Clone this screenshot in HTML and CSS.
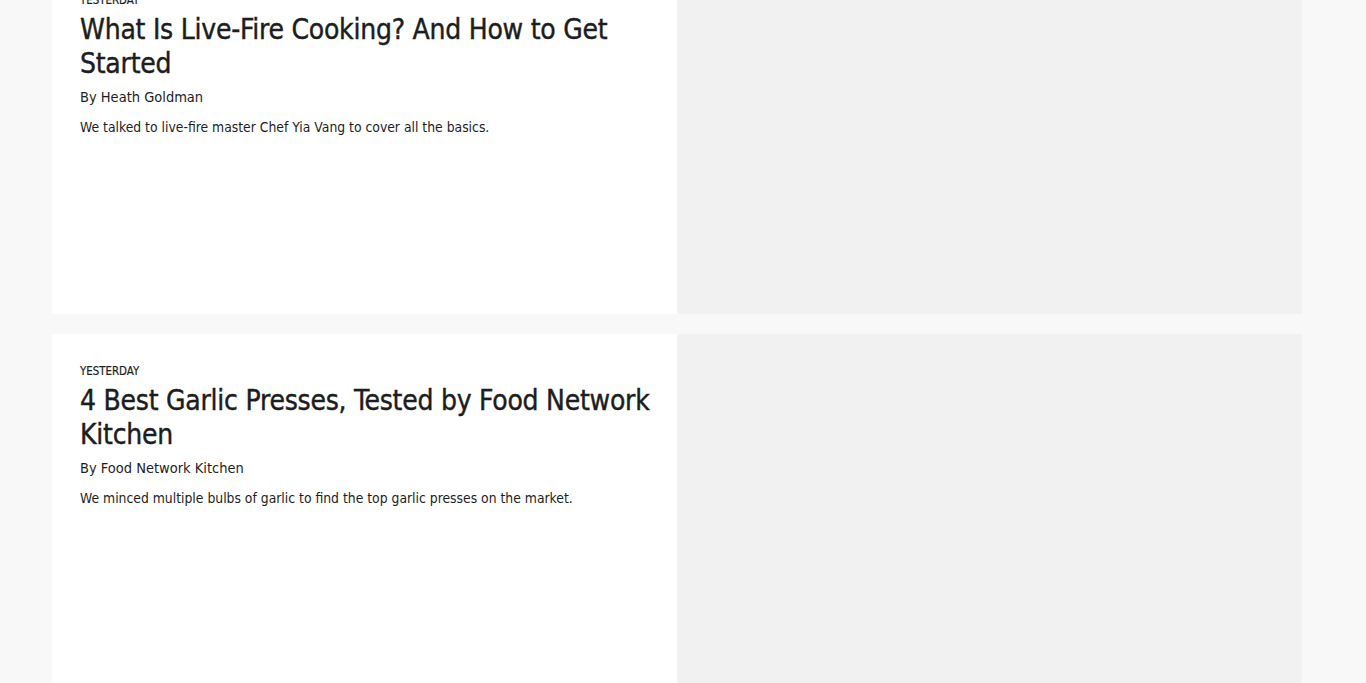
FILE: index.html
```html
<!DOCTYPE html>
<html lang="en">
<head>
<meta charset="utf-8">
<title>Articles</title>
<link rel="stylesheet" href="styles.css">
</head>
<body>
<main class="feed">
  <article class="card">
    <div class="card-body">
      <div class="card-date">Yesterday</div>
      <h2 class="card-title">What Is Live-Fire Cooking? And How to Get Started</h2>
      <div class="card-byline">By Heath Goldman</div>
      <p class="card-desc">We talked to live-fire master Chef Yia Vang to cover all the basics.</p>
    </div>
    <div class="card-media"></div>
  </article>
  <article class="card">
    <div class="card-body">
      <div class="card-date">Yesterday</div>
      <h2 class="card-title">4 Best Garlic Presses, Tested by Food Network Kitchen</h2>
      <div class="card-byline">By Food Network Kitchen</div>
      <p class="card-desc">We minced multiple bulbs of garlic to find the top garlic presses on the market.</p>
    </div>
    <div class="card-media"></div>
  </article>
</main>
</body>
</html>
```

FILE: styles.css
```css
html, body {
  margin: 0;
  padding: 0;
  background: #f8f8f8;
}
body {
  font-family: "DejaVu Sans Condensed", "Liberation Sans", sans-serif;
  color: #1d1d1d;
}
.feed {
  width: 1250px;
  margin: -37.5px 0 0 52px;
  display: flex;
  flex-direction: column;
  gap: 20px;
}
.card {
  display: grid;
  grid-template-columns: 625px 625px;
  background: #ffffff;
}
.card-body {
  padding: 28px 10px 28px 28px;
}
.card-media {
  aspect-ratio: 16 / 9;
  background: #f1f1f1;
}
.card-date {
  font-size: 11.4px;
  text-transform: uppercase;
  line-height: 14px;
  margin-top: 2px;
  -webkit-text-stroke: 0.2px #1d1d1d;
}
.card-title {
  font-size: 28px;
  line-height: 34px;
  font-weight: 400;
  margin: 6px 0 0;
  letter-spacing: -0.25px;
  -webkit-text-stroke: 0.4px #1d1d1d;
}
.card-byline {
  font-size: 14.5px;
  line-height: 20px;
  margin-top: 6px;
}
.card-desc {
  font-size: 13.8px;
  line-height: 20px;
  margin: 10px 0 0;
}
```
